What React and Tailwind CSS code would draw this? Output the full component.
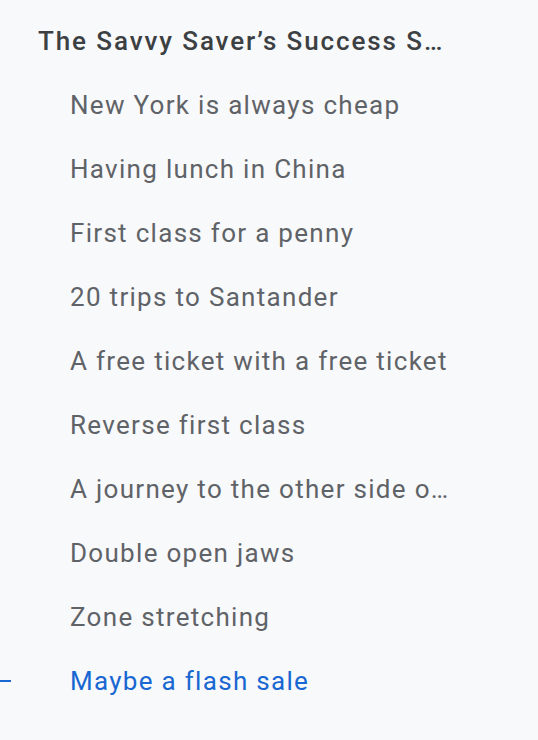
export default function App() {
  const items = [
    "New York is always cheap",
    "Having lunch in China",
    "First class for a penny",
    "20 trips to Santander",
    "A free ticket with a free ticket",
    "Reverse first class",
    "A journey to the other side of the world",
    "Double open jaws",
    "Zone stretching",
  ];
  return (
    <div
      className="w-[538px] h-[740px] bg-[#f8f9fa] pt-[9px] overflow-hidden"
      style={{ fontFamily: "Roboto, 'Noto Sans', sans-serif" }}
    >
      <div className="h-16 flex items-center pl-[38px] pr-[92px]">
        <span className="truncate text-[26px] font-medium tracking-[1.9px] text-[#3c4043]">
          The Savvy Saver’s Success Stories
        </span>
      </div>
      {items.map((t) => (
        <div key={t} className="h-16 flex items-center pl-[70px] pr-[88px]">
          <span className="truncate text-[26px] tracking-[1.3px] text-[#5f6368]">{t}</span>
        </div>
      ))}
      <div className="h-16 flex items-center relative pl-[70px]">
        <div className="absolute left-0 top-1/2 -translate-y-1/2 w-[11px] h-[2px] bg-[#1967d2]" />
        <span className="text-[26px] tracking-[1.3px] text-[#1967d2]">Maybe a flash sale</span>
      </div>
    </div>
  );
}
